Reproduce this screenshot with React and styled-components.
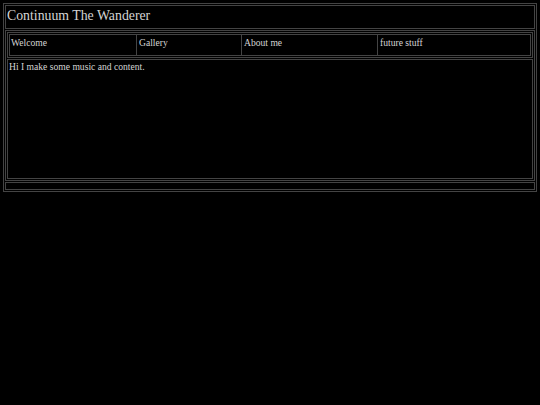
import React from "react";
import styled, { createGlobalStyle } from "styled-components";

const Global = createGlobalStyle`
  html, body { background: #000; }
  body {
    margin: 3px;
    color: #d4d4d4;
    font-family: "Liberation Serif", "Times New Roman", serif;
    font-size: 9.6px;
  }
`;

const line = "#444444";

const Frame = styled.div`
  border: 1px solid ${line};
  padding: 1px;
  display: flex;
  flex-direction: column;
  gap: 1px;
`;

const Cell = styled.div`
  border: 1px solid ${line};
  padding: ${(p) => p.$pad || "1px"};
  height: ${(p) => (p.$h ? p.$h + "px" : "auto")};
  box-sizing: border-box;
`;

const Title = styled(Cell)`
  font-size: 13.8px;
  line-height: 19px;
  padding: 0 0 3px 1px;
  height: 24px;
`;

const Stack = styled.div`
  display: flex;
  flex-direction: column;
  gap: 1px;
`;

const NavRow = styled.div`
  display: grid;
  grid-template-columns: 128px 105px 136px 1fr;
`;

const NavItem = styled.div`
  border: 1px solid ${line};
  border-left-width: ${(p) => (p.$first ? "1px" : "0")};
  height: 22px;
  box-sizing: border-box;
  padding: 2px ${(p) => (p.$first ? "1px" : "2px")};
  line-height: 11px;
`;

const Content = styled(Cell)`
  height: 120px;
  line-height: 11px;
  padding: 1px;
`;

const items = ["Welcome", "Gallery", "About me", "future stuff"];

export default function App() {
  return (
    <>
      <Global />
      <Frame>
        <Title>Continuum The Wanderer</Title>
        <Cell>
          <Stack>
            <Cell $h={26}>
              <NavRow>
                {items.map((t, i) => (
                  <NavItem key={t} $first={i === 0}>
                    {t}
                  </NavItem>
                ))}
              </NavRow>
            </Cell>
            <Content>Hi I make some music and content.</Content>
          </Stack>
        </Cell>
        <Cell $h={8} $pad="0" />
      </Frame>
    </>
  );
}
